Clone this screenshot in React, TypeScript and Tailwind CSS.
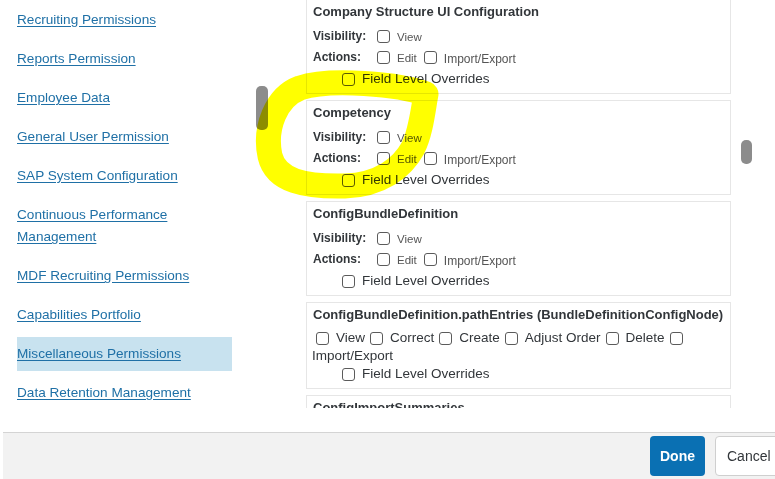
const navItems = [
  "Recruiting Permissions",
  "Reports Permission",
  "Employee Data",
  "General User Permission",
  "SAP System Configuration",
  "Continuous Performance Management",
  "MDF Recruiting Permissions",
  "Capabilities Portfolio",
  "Miscellaneous Permissions",
  "Data Retention Management",
];

function Box() {
  return (
    <span className="inline-block w-[13px] h-[13px] shrink-0 rounded-[3px] border border-[#5b5b5b] bg-white" />
  );
}

function StandardCard({ title }: { title: string }) {
  return (
    <div className="border border-[#e6e6e6] bg-white pt-[3px] pb-[3px] pl-[6px]">
      <div className="h-[18px] leading-[18px] text-[13px] font-bold text-[#32363a]">{title}</div>
      <div className="mt-[5px] flex h-[20px] items-center">
        <span className="w-[64px] text-[12px] font-bold text-[#32363a]">Visibility:</span>
        <Box />
        <span className="ml-[7px] mt-[4px] text-[11.5px] text-[#555]">View</span>
      </div>
      <div className="flex h-[22px] items-center">
        <span className="w-[64px] text-[12px] font-bold text-[#32363a]">Actions:</span>
        <Box />
        <span className="ml-[7px] mt-[4px] text-[11.5px] text-[#555]">Edit</span>
        <span className="ml-[7px] flex items-center">
          <Box />
        </span>
        <span className="ml-[7px] mt-[4px] text-[12px] text-[#555]">Import/Export</span>
      </div>
      <div className="ml-[29px] flex h-[22px] items-center">
        <Box />
        <span className="ml-[7px] text-[13.5px] text-[#32363a]">Field Level Overrides</span>
      </div>
    </div>
  );
}

function NodeCard() {
  const opts = ["View", "Correct", "Create", "Adjust Order", "Delete"];
  return (
    <div className="border border-[#e6e6e6] bg-white pt-[3px] pb-[3px] pl-[6px]">
      <div className="h-[18px] leading-[18px] text-[13px] font-bold text-[#32363a]">
        ConfigBundleDefinition.pathEntries (BundleDefinitionConfigNode)
      </div>
      <div className="mt-[4px] flex h-[20px] items-center text-[13.5px] text-[#32363a]">
        {opts.map((o, i) => (
          <span key={o} className={`flex items-center ${i === 0 ? "ml-[3px]" : "ml-[5px]"}`}>
            <Box />
            <span className="ml-[7px]">{o}</span>
          </span>
        ))}
        <span className="ml-[5px] flex items-center">
          <Box />
        </span>
      </div>
      <div className="-ml-[1px] h-[15px] leading-[15px] text-[13.5px] text-[#32363a]">Import/Export</div>
      <div className="ml-[29px] flex h-[22px] items-center">
        <Box />
        <span className="ml-[7px] text-[13.5px] text-[#32363a]">Field Level Overrides</span>
      </div>
    </div>
  );
}

export default function App() {
  return (
    <div className="relative w-[775px] h-[479px] overflow-hidden bg-white font-['Liberation_Sans',Arial,sans-serif]">
      <div className="flex h-[432px]">
        {/* left nav */}
        <div className="relative w-[300px] shrink-0">
          <div className="flex flex-col gap-[5px] pt-[3px] pl-[17px]">
            {navItems.map((item) => (
              <div
                key={item}
                className={`w-[215px] py-[6px] leading-[22px] text-[13.6px] ${
                  item === "Miscellaneous Permissions" ? "bg-[#c8e2ef]" : ""
                }`}
              >
                <a href="#" className="text-[#1f70a6] underline underline-offset-2">
                  {item}
                </a>
              </div>
            ))}
          </div>
          <div className="absolute left-[256px] top-[86px] h-[44px] w-[12px] rounded-[5px] bg-[#8c8c8c]" />
        </div>

        {/* right pane */}
        <div className="relative flex-1">
          <div className="h-[408px] overflow-hidden pl-[6px]">
            <div className="-mt-[1px] flex w-[425px] flex-col gap-[6px]">
              <StandardCard title="Company Structure UI Configuration" />
              <StandardCard title="Competency" />
              <StandardCard title="ConfigBundleDefinition" />
              <NodeCard />
              <StandardCard title="ConfigImportSummaries" />
            </div>
          </div>
          <div className="absolute left-[441px] top-[140px] h-[24px] w-[11px] rounded-[5px] bg-[#8c8c8c]" />
        </div>
      </div>

      {/* footer */}
      <div className="ml-[3px] flex h-[47px] items-center justify-end gap-[10px] border-t border-[#d4d4d4] bg-[#f2f2f2]">
        <button className="h-[40px] w-[55px] rounded-[4px] bg-[#0a70b3] text-[14px] font-bold text-white">
          Done
        </button>
        <button className="-mr-[10px] h-[40px] w-[70px] rounded-l-[4px] border border-[#cfcfcf] bg-white pl-[11px] text-left text-[14px] text-[#32363a]">
          Cancel
        </button>
      </div>

      {/* highlighter scribble */}
      <svg
        className="pointer-events-none absolute left-0 top-0 mix-blend-multiply"
        width="775"
        height="479"
        viewBox="0 0 775 479"
      >
        <path
          d="M 426 94 C 400 84, 330 78, 300 88 C 276 97, 264 128, 270 156 C 276 181, 305 187, 345 186 C 380 185, 402 168, 413 148 C 421 132, 423 110, 426 94 Z"
          fill="none"
          stroke="#ffff00"
          strokeWidth="25"
          strokeLinecap="round"
          strokeLinejoin="round"
        />
      </svg>
    </div>
  );
}
